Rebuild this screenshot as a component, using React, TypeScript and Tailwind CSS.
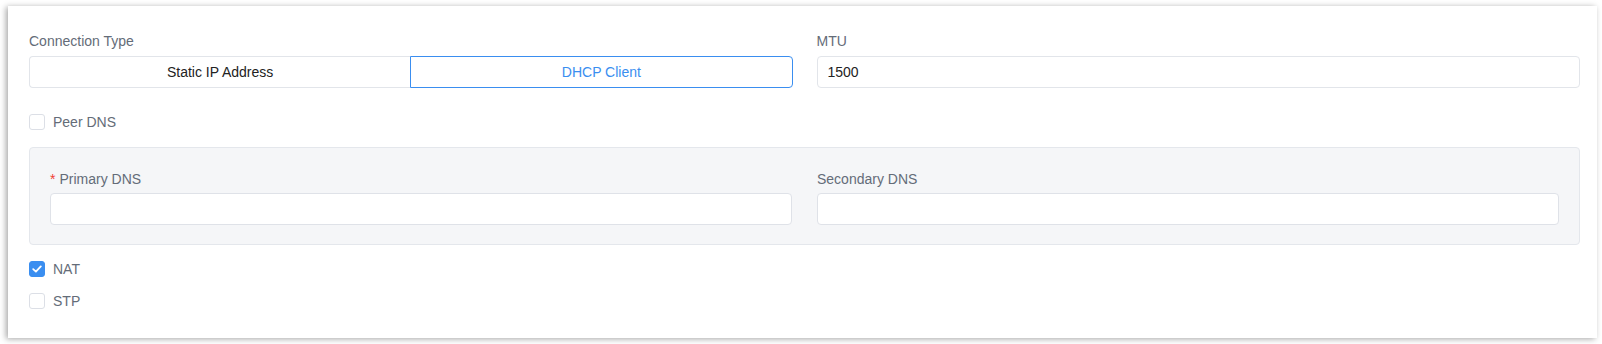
import { useState } from 'react';

const font = { fontFamily: '"Liberation Sans", Arial, sans-serif' };

const Checkbox = ({ label, checked, onChange }: { label: string; checked: boolean; onChange: () => void }) => (
  <label className="flex items-center h-[22px] cursor-pointer select-none" onClick={onChange}>
    <span
      className={`w-[16px] h-[16px] rounded-[3px] border flex items-center justify-center ${
        checked ? 'bg-[#3a8ef0] border-[#3a8ef0]' : 'bg-white border-[#dcdfe6]'
      }`}
    >
      {checked && (
        <svg width="10" height="8" viewBox="0 0 10 8" fill="none">
          <path d="M1.2 4.1 L3.9 6.6 L8.8 1.4" stroke="white" strokeWidth="1.8" strokeLinecap="round" strokeLinejoin="round" />
        </svg>
      )}
    </span>
    <span className="ml-[8px] text-[14px] text-[#646c78]">{label}</span>
  </label>
);

const Field = ({ label, required, value }: { label: string; required?: boolean; value?: string }) => (
  <div>
    <div className="h-[22px] leading-[22px] mb-[3px] text-[14px] text-[#646c78]">
      {required && <span className="text-[#f04134] mr-[4px]">*</span>}
      {label}
    </div>
    <input
      defaultValue={value}
      className="w-full h-[32px] px-[11px] bg-white border border-[#dfe2e8] rounded-[4px] text-[14px] text-[#222] outline-none"
    />
  </div>
);

const App = () => {
  const [mode, setMode] = useState<'static' | 'dhcp'>('dhcp');
  const [peerDns, setPeerDns] = useState(false);
  const [nat, setNat] = useState(true);
  const [stp, setStp] = useState(false);

  return (
    <div className="w-[1602px] h-[344px] bg-white pt-[6px] pl-[8px]" style={font}>
      <div className="w-[1589px] h-[332px] bg-white pl-[21px] pr-[17px] pt-[24px] shadow-[-2px_1px_6px_rgba(0,0,0,0.35)]">
        {/* connection type + mtu */}
        <div className="grid grid-cols-2 gap-x-[24px]">
          <div>
            <div className="h-[22px] leading-[22px] mb-[4px] text-[14px] text-[#646c78]">Connection Type</div>
            <div className="flex h-[32px] text-[14px]">
              <button
                onClick={() => setMode('static')}
                className={`flex-1 rounded-l-[4px] border ${
                  mode === 'static' ? 'border-[#3a8ef0] text-[#3a8ef0]' : 'border-[#e2e5ea] border-r-0 text-[#222]'
                }`}
              >
                Static IP Address
              </button>
              <button
                onClick={() => setMode('dhcp')}
                className={`flex-1 rounded-r-[4px] border ${
                  mode === 'dhcp' ? 'border-[#3a8ef0] text-[#3a8ef0]' : 'border-[#e2e5ea] border-l-0 text-[#222]'
                }`}
              >
                DHCP Client
              </button>
            </div>
          </div>
          <div>
            <div className="h-[22px] leading-[22px] mb-[4px] text-[14px] text-[#646c78]">MTU</div>
            <input
              defaultValue="1500"
              className="w-full h-[32px] px-[10px] bg-white border border-[#e2e5ea] rounded-[4px] text-[14px] text-[#222] outline-none"
            />
          </div>
        </div>

        <div className="mt-[23px]">
          <Checkbox label="Peer DNS" checked={peerDns} onChange={() => setPeerDns(!peerDns)} />
        </div>

        {/* dns box */}
        <div className="mt-[14px] bg-[#f5f6f8] border border-[#e4e7ec] rounded-[4px] px-[20px] pt-[20px] pb-[19px]">
          <div className="grid grid-cols-2 gap-x-[25px]">
            <Field label="Primary DNS" required />
            <Field label="Secondary DNS" />
          </div>
        </div>

        <div className="mt-[13px] flex flex-col gap-[10px]">
          <Checkbox label="NAT" checked={nat} onChange={() => setNat(!nat)} />
          <Checkbox label="STP" checked={stp} onChange={() => setStp(!stp)} />
        </div>
      </div>
    </div>
  );
};

export default App;
